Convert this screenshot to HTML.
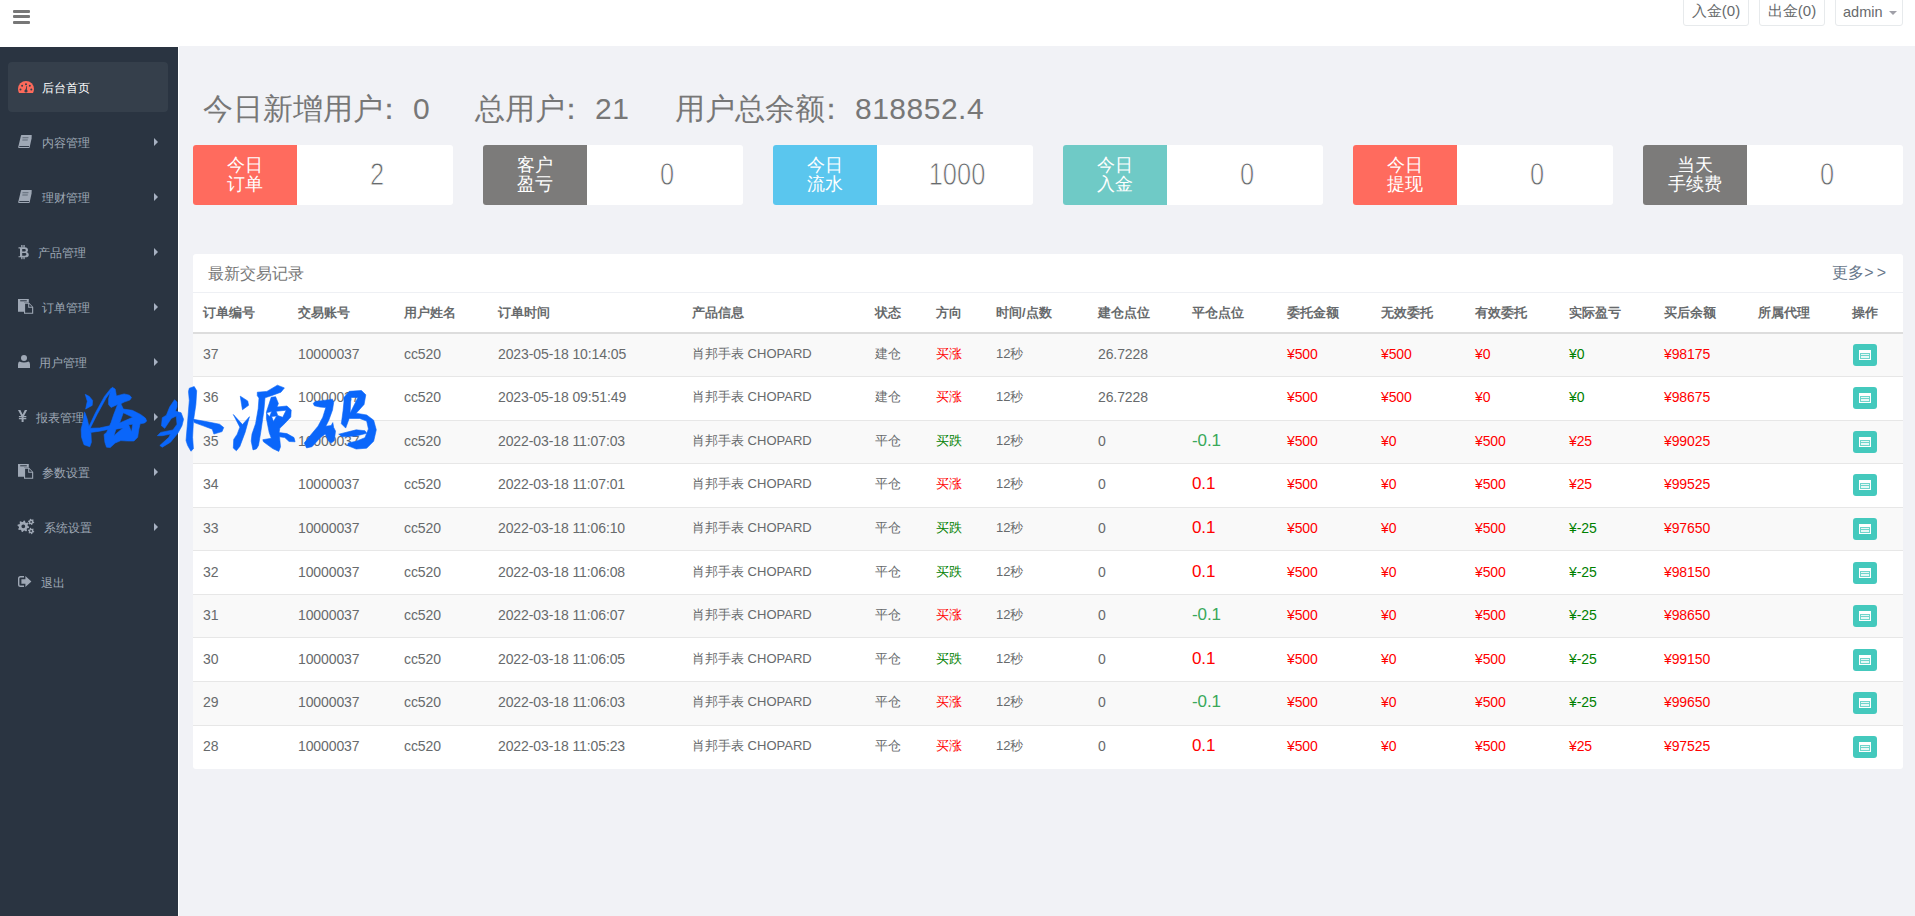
<!DOCTYPE html>
<html><head><meta charset="utf-8">
<style>
*{box-sizing:border-box;margin:0;padding:0}
html,body{width:1915px;height:916px;overflow:hidden}
body{position:relative;background:#f1f2f6;font-family:"Liberation Sans",sans-serif;color:#676a6c;font-size:13px}
#hdr{position:absolute;left:0;top:0;width:1915px;height:46px;background:#fff}
#burger{position:absolute;left:13px;top:10px;width:17px;height:14px}
#burger i{position:absolute;left:0;width:17px;height:3px;background:#777;border-radius:1px}
.tb{position:absolute;top:-5px;height:31px;border:1px solid #e7eaec;border-radius:3px;background:#fff;color:#676a6c;font-size:15px;line-height:30px;padding-top:0}
#side{position:absolute;left:0;top:46px;width:178px;height:870px;background:#2a3441;border-top:1px solid #fff}
#sidewhite{position:absolute;left:178px;top:46px;width:1px;height:870px;background:#fff}
.nav{position:absolute;left:8px;width:160px;height:50px;color:#9fa8b5;font-size:12px;line-height:52px}
.nav.act{background:#353f4b;border-radius:4px;color:#fff}
.nav .tx{position:absolute;top:0}
.nav .car{position:absolute;left:146px;top:21px;width:0;height:0;border-left:4px solid #a7b1c2;border-top:4px solid transparent;border-bottom:4px solid transparent}
.nav svg{position:absolute}
.col{position:relative;left:-9px}
.dg{letter-spacing:0.5px}
#stats{position:absolute;left:203px;top:89px;font-size:30px;color:#777;white-space:nowrap;line-height:40px}
.box{position:absolute;top:145px;width:260px;height:60px;background:#fff;border-radius:3px;overflow:hidden}
.box .lb{position:absolute;left:0;top:0;width:104px;height:60px;color:#fff;font-size:18px;line-height:19px;text-align:center;padding-top:11px}
.box .vl{position:absolute;left:106px;top:0;width:156px;height:60px;text-align:center;font-size:31px;line-height:60px;color:#676a6c;-webkit-text-stroke:0.8px #fff;transform:scaleX(0.82)}
#panel{position:absolute;left:193px;top:254px;width:1710px;height:515px;background:#fff;border-radius:3px;overflow:hidden}
#ptitle{position:absolute;left:15px;top:10px;font-size:16px;color:#777}
#more{position:absolute;right:17px;top:9px;font-size:16px;color:#68778a}
#pdiv{position:absolute;left:0;top:38px;width:1710px;height:1px;background:#eef0f4}
table{position:absolute;left:0;top:39px;width:1710px;border-collapse:collapse;table-layout:fixed}
th{font-weight:bold;text-align:left;height:40px;padding:0 0 0 10px;border-bottom:2px solid #dddddd;font-size:13px;color:#676a6c}
td{height:43.57px;padding:0 0 2px 10px;border-top:1px solid #e7e7e7;font-size:14px;letter-spacing:-0.1px;color:#676a6c;white-space:nowrap}
tbody tr:first-child td{border-top:0}
tbody tr:nth-child(odd) td{background:#f9f9f9}
.cj{font-size:13px;letter-spacing:0}
.red{color:#ff0000}
.dgreen{color:#008000}
.lgreen{color:#3aa85a}
.pc{font-size:17px}
.btn{display:inline-block;position:relative;top:1px;width:24px;height:22px;background:#44c9bd;border-radius:3px;vertical-align:middle;margin-left:1px}
.btn b{position:absolute;left:6px;top:6px;width:12px;height:10px;background:#fff}
.btn b:before{content:"";position:absolute;left:1px;top:3px;width:10px;height:6px;border:1px solid #6fd5cb;background:#e6f8f6;box-sizing:border-box}
.btn b:after{content:"";position:absolute;left:1px;top:5px;width:10px;height:1px;background:#6fd5cb}
#wm{position:absolute;left:75px;top:380px}
</style></head><body>
<div id="hdr">
  <div id="burger"><i style="top:0"></i><i style="top:5px"></i><i style="top:11px"></i></div>
  <div class="tb" style="left:1683px;width:66px;text-align:center">入金(0)</div>
  <div class="tb" style="left:1759px;width:66px;text-align:center">出金(0)</div>
  <div class="tb" style="left:1835px;width:68px;font-size:14.5px;padding-left:7px;line-height:33px">admin<span style="position:absolute;left:53px;top:15px;width:0;height:0;border-top:4px solid #a0a0a8;border-left:4px solid transparent;border-right:4px solid transparent"></span></div>
</div>
<div id="side"></div>
<div id="sidewhite"></div>
<!-- nav -->
<div class="nav act" style="top:62px"><span class="tx" style="left:34px">后台首页</span></div>
<div class="nav " style="top:117px"><span class="tx" style="left:34px">内容管理</span><span class="car"></span></div>
<div class="nav " style="top:172px"><span class="tx" style="left:34px">理财管理</span><span class="car"></span></div>
<div class="nav " style="top:227px"><span class="tx" style="left:30px">产品管理</span><span class="car"></span></div>
<div class="nav " style="top:282px"><span class="tx" style="left:34px">订单管理</span><span class="car"></span></div>
<div class="nav " style="top:337px"><span class="tx" style="left:31px">用户管理</span><span class="car"></span></div>
<div class="nav " style="top:392px"><span class="tx" style="left:28px">报表管理</span><span class="car"></span></div>
<div class="nav " style="top:447px"><span class="tx" style="left:34px">参数设置</span><span class="car"></span></div>
<div class="nav " style="top:502px"><span class="tx" style="left:36px">系统设置</span><span class="car"></span></div>
<div class="nav " style="top:557px"><span class="tx" style="left:33px">退出</span></div>
<svg width="178" height="916" viewBox="0 0 178 916" style="position:absolute;left:0;top:0"><g transform="translate(18,81)"><path d="M1,12 Q0,10.4 0,8 A8,8 0 0 1 16,8 Q16,10.4 15,12 Z" fill="#fd6a5b"/><g fill="#353f4b"><circle cx="8" cy="3.2" r="1"/><circle cx="4.1" cy="4.7" r="1"/><circle cx="11.8" cy="4.7" r="1"/><circle cx="2.5" cy="8.6" r="1"/><circle cx="13.3" cy="8.6" r="1"/><circle cx="8" cy="10" r="1.6"/><path d="M7.2,10 L8.5,5 L9.1,5.1 L8.7,10 Z"/></g></g><g transform="translate(18,135)"><path d="M3.6,0 H13.2 Q14,0 13.8,0.9 L11.6,10.6 Q11.4,11.2 10.8,11.2 H1.4 L1.2,11.6 H10.6 L12.6,2.2 L13.8,2.4 L11.6,12.4 Q11.4,13 10.8,13 H1 Q0,13 0.2,12 L0.6,10.6 L3,0.6 Q3.1,0 3.6,0 Z" fill="#9fa8b5"/><rect x="5" y="2.2" width="6" height="1" fill="#2a3441" opacity="0.55" transform="skewX(-12)"/><rect x="5.4" y="4.4" width="5.4" height="1" fill="#2a3441" opacity="0.55" transform="skewX(-12)"/><rect x="1.4" y="11" width="9.6" height="0.9" fill="#2a3441"/></g><g transform="translate(18,190)"><path d="M3.6,0 H13.2 Q14,0 13.8,0.9 L11.6,10.6 Q11.4,11.2 10.8,11.2 H1.4 L1.2,11.6 H10.6 L12.6,2.2 L13.8,2.4 L11.6,12.4 Q11.4,13 10.8,13 H1 Q0,13 0.2,12 L0.6,10.6 L3,0.6 Q3.1,0 3.6,0 Z" fill="#9fa8b5"/><rect x="5" y="2.2" width="6" height="1" fill="#2a3441" opacity="0.55" transform="skewX(-12)"/><rect x="5.4" y="4.4" width="5.4" height="1" fill="#2a3441" opacity="0.55" transform="skewX(-12)"/><rect x="1.4" y="11" width="9.6" height="0.9" fill="#2a3441"/></g><g transform="translate(18,245)"><path d="M0.5,2.3 H6.8 Q10,2.3 10,5.2 Q10,6.6 8.6,7.1 Q10.8,7.7 10.8,9.7 Q10.8,12.3 7.4,12.3 H0.5 V11.2 H2 V3.4 H0.5 Z M4.2,3.9 V6.4 H6.6 Q7.8,6.4 7.8,5.15 Q7.8,3.9 6.6,3.9 Z M4.2,8 V10.7 H6.9 Q8.4,10.7 8.4,9.35 Q8.4,8 6.9,8 Z" fill="#9fa8b5" fill-rule="evenodd"/><rect x="3.2" y="0" width="1.3" height="2.6" fill="#9fa8b5"/><rect x="5.4" y="0" width="1.3" height="2.6" fill="#9fa8b5"/><rect x="3.2" y="12" width="1.3" height="2.2" fill="#9fa8b5"/><rect x="5.4" y="12" width="1.3" height="2.2" fill="#9fa8b5"/></g><g transform="translate(18,299)"><path d="M0,0 H10.8 V3.6 H6 V12.8 H0 Z" fill="#9fa8b5"/><rect x="2.2" y="1.3" width="6.6" height="1" fill="#2a3441"/><path d="M6,3.6 H10.8 L15.2,8 V14.8 H6 Z M7.1,4.7 V13.7 H14.1 V8.8 H10.2 V4.7 Z M11.2,4.9 V7.8 H14 Z" fill="#9fa8b5" fill-rule="evenodd"/></g><g transform="translate(18,355)"><circle cx="6" cy="3" r="3" fill="#9fa8b5"/><path d="M1.5,6.4 Q3.5,7.4 6,7.4 Q8.5,7.4 10.5,6.4 Q12,7 12,9.5 V13 H0 V9.5 Q0,7 1.5,6.4 Z" fill="#9fa8b5"/></g><g transform="translate(18,410)"><path d="M0,0 H2.4 L4.6,4.6 L6.8,0 H9.2 L6,6 H8.3 V7.2 H5.6 V8.1 H8.3 V9.3 H5.6 V12 H3.6 V9.3 H0.9 V8.1 H3.6 V7.2 H0.9 V6 H3.2 Z" fill="#9fa8b5"/></g><g transform="translate(18,464)"><path d="M0,0 H10.8 V3.6 H6 V12.8 H0 Z" fill="#9fa8b5"/><rect x="2.2" y="1.3" width="6.6" height="1" fill="#2a3441"/><path d="M6,3.6 H10.8 L15.2,8 V14.8 H6 Z M7.1,4.7 V13.7 H14.1 V8.8 H10.2 V4.7 Z M11.2,4.9 V7.8 H14 Z" fill="#9fa8b5" fill-rule="evenodd"/></g><path d="M29.07,526.87 L28.85,527.98 L27.18,528.37 L26.70,529.09 L26.98,530.78 L26.03,531.42 L24.58,530.51 L23.73,530.68 L22.73,532.07 L21.62,531.85 L21.23,530.18 L20.51,529.70 L18.82,529.98 L18.18,529.03 L19.09,527.58 L18.92,526.73 L17.53,525.73 L17.75,524.62 L19.42,524.23 L19.90,523.51 L19.62,521.82 L20.57,521.18 L22.02,522.09 L22.87,521.92 L23.87,520.53 L24.98,520.75 L25.37,522.42 L26.09,522.90 L27.78,522.62 L28.42,523.57 L27.51,525.02 L27.68,525.87 Z M25.20,526.30 A1.9,1.9 0 1 0 21.40,526.30 A1.9,1.9 0 1 0 25.20,526.30 Z M34.27,522.32 L34.06,523.12 L32.92,523.30 L32.50,523.72 L32.32,524.86 L31.52,525.07 L30.80,524.18 L30.22,524.02 L29.15,524.44 L28.56,523.85 L28.98,522.78 L28.82,522.20 L27.93,521.48 L28.14,520.68 L29.28,520.50 L29.70,520.08 L29.88,518.94 L30.68,518.73 L31.40,519.62 L31.98,519.78 L33.05,519.36 L33.64,519.95 L33.22,521.02 L33.38,521.60 Z M32.00,521.90 A0.9,0.9 0 1 0 30.20,521.90 A0.9,0.9 0 1 0 32.00,521.90 Z M34.27,531.42 L34.06,532.22 L32.92,532.40 L32.50,532.82 L32.32,533.96 L31.52,534.17 L30.80,533.28 L30.22,533.12 L29.15,533.54 L28.56,532.95 L28.98,531.88 L28.82,531.30 L27.93,530.58 L28.14,529.78 L29.28,529.60 L29.70,529.18 L29.88,528.04 L30.68,527.83 L31.40,528.72 L31.98,528.88 L33.05,528.46 L33.64,529.05 L33.22,530.12 L33.38,530.70 Z M32.00,531.00 A0.9,0.9 0 1 0 30.20,531.00 A0.9,0.9 0 1 0 32.00,531.00 Z" fill="#9fa8b5" fill-rule="evenodd"/><g transform="translate(18,576)"><path d="M6,0 H2.5 Q0,0 0,2.5 V8.5 Q0,11 2.5,11 H6 V9.6 H2.6 Q1.4,9.6 1.4,8.4 V2.6 Q1.4,1.4 2.6,1.4 H6 Z" fill="#9fa8b5"/><path d="M3.4,3.3 H7.4 V0 L13.4,5.5 L7.4,11 V7.7 H3.4 Z" fill="#9fa8b5"/></g></svg>
<div id="stats"><span>今日新增用户<span class="col">：</span><span class="dg">0</span></span><span style="position:absolute;left:272px">总用户<span class="col">：</span><span class="dg">21</span></span><span style="position:absolute;left:472px">用户总余额<span class="col">：</span><span class="dg">818852.4</span></span></div>
<div class="box" style="left:193px"><div class="lb" style="background:#ff6b5e">今日<br>订单</div><div class="vl">2</div></div>
<div class="box" style="left:483px"><div class="lb" style="background:#7c7b7a">客户<br>盈亏</div><div class="vl">0</div></div>
<div class="box" style="left:773px"><div class="lb" style="background:#5ac6ee">今日<br>流水</div><div class="vl">1000</div></div>
<div class="box" style="left:1063px"><div class="lb" style="background:#6fcac6">今日<br>入金</div><div class="vl">0</div></div>
<div class="box" style="left:1353px"><div class="lb" style="background:#ff6b5e">今日<br>提现</div><div class="vl">0</div></div>
<div class="box" style="left:1643px"><div class="lb" style="background:#7c7b7a">当天<br>手续费</div><div class="vl">0</div></div>
<div id="panel">
  <div id="ptitle">最新交易记录</div>
  <div id="more">更多&gt;<span style="margin-left:3px">&gt;</span></div>
  <div id="pdiv"></div>
  <table>
  <colgroup><col style="width:95px"><col style="width:106px"><col style="width:94px"><col style="width:194px"><col style="width:183px"><col style="width:61px"><col style="width:60px"><col style="width:102px"><col style="width:94px"><col style="width:95px"><col style="width:94px"><col style="width:94px"><col style="width:94px"><col style="width:95px"><col style="width:94px"><col style="width:94px"><col style="width:61px"></colgroup>
  <thead><tr><th>订单编号</th><th>交易账号</th><th>用户姓名</th><th>订单时间</th><th>产品信息</th><th>状态</th><th>方向</th><th>时间/点数</th><th>建仓点位</th><th>平仓点位</th><th>委托金额</th><th>无效委托</th><th>有效委托</th><th>实际盈亏</th><th>买后余额</th><th>所属代理</th><th>操作</th></tr></thead>
  <tbody>
<tr><td>37</td><td>10000037</td><td>cc520</td><td>2023-05-18 10:14:05</td><td class="cj">肖邦手表 CHOPARD</td><td class="cj">建仓</td><td class="cj"><span class="red">买涨</span></td><td class="cj">12秒</td><td>26.7228</td><td></td><td class="red">¥500</td><td class="red">¥500</td><td class="red">¥0</td><td class="dgreen">¥0</td><td class="red">¥98175</td><td></td><td><i class="btn"><b></b></i></td></tr>
<tr><td>36</td><td>10000037</td><td>cc520</td><td>2023-05-18 09:51:49</td><td class="cj">肖邦手表 CHOPARD</td><td class="cj">建仓</td><td class="cj"><span class="red">买涨</span></td><td class="cj">12秒</td><td>26.7228</td><td></td><td class="red">¥500</td><td class="red">¥500</td><td class="red">¥0</td><td class="dgreen">¥0</td><td class="red">¥98675</td><td></td><td><i class="btn"><b></b></i></td></tr>
<tr><td>35</td><td>10000037</td><td>cc520</td><td>2022-03-18 11:07:03</td><td class="cj">肖邦手表 CHOPARD</td><td class="cj">平仓</td><td class="cj"><span class="dgreen">买跌</span></td><td class="cj">12秒</td><td>0</td><td><span class="pc lgreen">-0.1</span></td><td class="red">¥500</td><td class="red">¥0</td><td class="red">¥500</td><td class="red">¥25</td><td class="red">¥99025</td><td></td><td><i class="btn"><b></b></i></td></tr>
<tr><td>34</td><td>10000037</td><td>cc520</td><td>2022-03-18 11:07:01</td><td class="cj">肖邦手表 CHOPARD</td><td class="cj">平仓</td><td class="cj"><span class="red">买涨</span></td><td class="cj">12秒</td><td>0</td><td><span class="pc red">0.1</span></td><td class="red">¥500</td><td class="red">¥0</td><td class="red">¥500</td><td class="red">¥25</td><td class="red">¥99525</td><td></td><td><i class="btn"><b></b></i></td></tr>
<tr><td>33</td><td>10000037</td><td>cc520</td><td>2022-03-18 11:06:10</td><td class="cj">肖邦手表 CHOPARD</td><td class="cj">平仓</td><td class="cj"><span class="dgreen">买跌</span></td><td class="cj">12秒</td><td>0</td><td><span class="pc red">0.1</span></td><td class="red">¥500</td><td class="red">¥0</td><td class="red">¥500</td><td class="dgreen">¥-25</td><td class="red">¥97650</td><td></td><td><i class="btn"><b></b></i></td></tr>
<tr><td>32</td><td>10000037</td><td>cc520</td><td>2022-03-18 11:06:08</td><td class="cj">肖邦手表 CHOPARD</td><td class="cj">平仓</td><td class="cj"><span class="dgreen">买跌</span></td><td class="cj">12秒</td><td>0</td><td><span class="pc red">0.1</span></td><td class="red">¥500</td><td class="red">¥0</td><td class="red">¥500</td><td class="dgreen">¥-25</td><td class="red">¥98150</td><td></td><td><i class="btn"><b></b></i></td></tr>
<tr><td>31</td><td>10000037</td><td>cc520</td><td>2022-03-18 11:06:07</td><td class="cj">肖邦手表 CHOPARD</td><td class="cj">平仓</td><td class="cj"><span class="red">买涨</span></td><td class="cj">12秒</td><td>0</td><td><span class="pc lgreen">-0.1</span></td><td class="red">¥500</td><td class="red">¥0</td><td class="red">¥500</td><td class="dgreen">¥-25</td><td class="red">¥98650</td><td></td><td><i class="btn"><b></b></i></td></tr>
<tr><td>30</td><td>10000037</td><td>cc520</td><td>2022-03-18 11:06:05</td><td class="cj">肖邦手表 CHOPARD</td><td class="cj">平仓</td><td class="cj"><span class="dgreen">买跌</span></td><td class="cj">12秒</td><td>0</td><td><span class="pc red">0.1</span></td><td class="red">¥500</td><td class="red">¥0</td><td class="red">¥500</td><td class="dgreen">¥-25</td><td class="red">¥99150</td><td></td><td><i class="btn"><b></b></i></td></tr>
<tr><td>29</td><td>10000037</td><td>cc520</td><td>2022-03-18 11:06:03</td><td class="cj">肖邦手表 CHOPARD</td><td class="cj">平仓</td><td class="cj"><span class="red">买涨</span></td><td class="cj">12秒</td><td>0</td><td><span class="pc lgreen">-0.1</span></td><td class="red">¥500</td><td class="red">¥0</td><td class="red">¥500</td><td class="dgreen">¥-25</td><td class="red">¥99650</td><td></td><td><i class="btn"><b></b></i></td></tr>
<tr><td>28</td><td>10000037</td><td>cc520</td><td>2022-03-18 11:05:23</td><td class="cj">肖邦手表 CHOPARD</td><td class="cj">平仓</td><td class="cj"><span class="red">买涨</span></td><td class="cj">12秒</td><td>0</td><td><span class="pc red">0.1</span></td><td class="red">¥500</td><td class="red">¥0</td><td class="red">¥500</td><td class="red">¥25</td><td class="red">¥97525</td><td></td><td><i class="btn"><b></b></i></td></tr>
</tbody></table>
</div>
<svg id="wm" width="1915" height="916" viewBox="0 0 1915 916" style="position:absolute;left:0;top:0;pointer-events:none"><g fill="#0a66fa" fill-rule="evenodd" stroke="#0a66fa" stroke-width="0.6" stroke-linejoin="round"><path d="M85.24,394.33 L89.33,396.38 L92.61,400.48 L92.20,405.39 L85.65,409.07 L87.29,401.29 Z"/><path d="M84.42,411.94 L83.19,420.95 L81.14,429.14 L81.55,437.33 L84.01,444.70 L89.74,446.75 L91.38,442.24 L90.97,433.24 L89.33,428.32 L87.29,419.31 L84.83,412.35 Z"/><path d="M88.10,428.32 L95.48,412.76 L104.48,396.38 L111.04,388.19 L112.67,389.01 L106.12,398.02 L97.11,414.40 L89.74,429.14 Z"/><path d="M88.92,428.32 L99.57,427.91 L109.40,425.86 L109.40,429.14 L99.57,431.19 L90.56,432.42 Z"/><path d="M112.26,387.21 L115.13,389.01 L115.95,393.10 L116.36,395.97 L124.14,393.92 L129.46,395.15 L131.51,397.61 L129.87,400.07 L124.14,402.11 L120.86,403.75 L123.32,409.07 L132.33,410.30 L140.52,414.40 L145.43,418.08 L146.66,420.95 L144.62,423.00 L140.11,423.82 L138.88,429.14 L137.65,437.33 L133.97,441.02 L127.42,441.02 L120.86,440.61 L115.13,443.06 L110.22,447.57 L106.53,447.16 L104.89,442.24 L104.07,434.46 L106.53,432.42 L107.76,429.96 L111.04,422.59 L113.49,415.22 L117.59,404.57 L111.04,407.44 L108.58,404.57 L108.58,398.84 L110.22,392.29 Z M123.32,412.76 L132.74,417.26 L119.64,423.00 Z M115.95,429.14 L122.91,427.91 L113.90,435.69 Z M128.64,424.64 L132.74,424.23 L131.51,432.01 Z"/><path d="M174.57,399.66 L177.03,402.11 L177.03,407.03 L175.39,411.12 L181.12,412.76 L183.58,419.31 L181.94,425.86 L177.85,433.24 L170.48,442.24 L162.29,447.16 L159.83,445.52 L168.84,437.33 L170.48,434.05 L162.29,435.69 L157.37,435.69 L160.65,432.42 L172.93,429.96 L177.03,424.23 L176.21,416.04 L171.29,418.49 L164.74,428.32 L161.47,425.86 L162.29,417.67 L166.38,415.22 L169.66,407.03 Z"/><path d="M189.31,388.19 L194.23,386.55 L196.68,390.65 L195.86,404.57 L193.41,420.95 L192.59,437.33 L193.41,448.80 L190.95,451.25 L187.67,445.52 L186.04,440.61 L187.67,420.95 L189.31,400.48 L188.49,391.47 Z"/><path d="M193.41,419.31 L207.33,421.77 L219.62,424.23 L223.71,427.50 L222.07,431.60 L213.88,434.05 L212.24,429.14 L203.24,425.86 L194.23,422.59 Z"/><path d="M240.28,396.16 L247.71,400.96 L248.58,405.33 L242.47,409.69 L241.59,404.45 Z"/><path d="M233.30,414.50 L242.47,424.54 L249.45,416.68 L245.09,432.40 L239.85,446.38 L236.35,450.74 L233.30,448.12 L233.73,439.39 L237.23,434.15 L239.85,427.16 Z"/><path d="M257.30,392.20 L266.90,391.40 L277.40,385.20 L284.40,387.90 L280.90,392.20 L272.00,395.50 L265.00,397.80 L263.80,411.30 L260.70,432.60 L258.50,445.40 L256.40,448.90 L253.00,449.90 L251.20,441.10 L252.00,434.10 L255.60,423.70 L258.20,408.80 L259.00,398.00 L257.30,395.70 Z"/><path d="M266.60,411.50 L271.20,397.30 L275.60,396.70 L278.40,403.50 L277.00,407.00 L286.90,406.00 L291.20,409.90 L290.80,417.00 L284.80,423.40 L279.80,428.30 L279.10,432.60 L286.90,433.60 L294.00,437.60 L295.10,441.80 L289.10,441.50 L284.80,437.60 L279.50,436.80 L280.50,446.80 L278.80,451.40 L272.70,448.60 L263.50,441.80 L262.80,439.70 L271.30,438.30 L269.20,432.60 L266.40,418.40 Z M266.40,412.70 L271.70,411.60 L269.50,416.80 Z M271.60,416.60 L276.60,415.90 L273.50,421.60 Z M276.30,411.30 L286.20,410.20 L282.70,417.30 L277.70,415.50 Z"/><path d="M313.20,403.40 L315.00,401.60 L324.00,400.40 L332.50,399.20 L333.70,402.20 L332.50,410.00 L328.80,420.20 L325.80,426.20 L331.20,425.60 L332.80,422.60 L333.70,427.50 L335.50,431.10 L334.30,440.70 L331.20,443.10 L328.20,440.70 L325.20,434.10 L319.80,438.30 L312.00,446.70 L306.60,447.90 L304.20,443.10 L309.00,437.10 L318.00,426.20 L322.80,417.20 L325.80,407.60 L319.80,407.00 L314.40,405.80 Z"/><path d="M343.95,397.48 L349.20,391.36 L361.43,390.49 L365.80,394.86 L364.06,404.48 L356.19,413.22 L366.68,414.97 L373.67,420.21 L376.29,429.83 L373.67,441.19 L366.68,448.18 L356.19,449.06 L347.45,445.56 L348.32,442.94 L356.19,441.19 L364.93,437.69 L368.43,428.95 L366.68,421.08 L359.69,418.46 L349.20,418.46 L345.70,428.08 L341.33,423.71 L343.08,410.59 L343.95,401.85 Z M350.94,397.48 L357.94,397.48 L350.07,413.22 Z"/><path d="M338.71,434.20 L356.19,429.83 L364.93,430.70 L366.68,433.32 L356.19,435.94 L342.20,436.82 Z"/></g></svg>
</body></html>
